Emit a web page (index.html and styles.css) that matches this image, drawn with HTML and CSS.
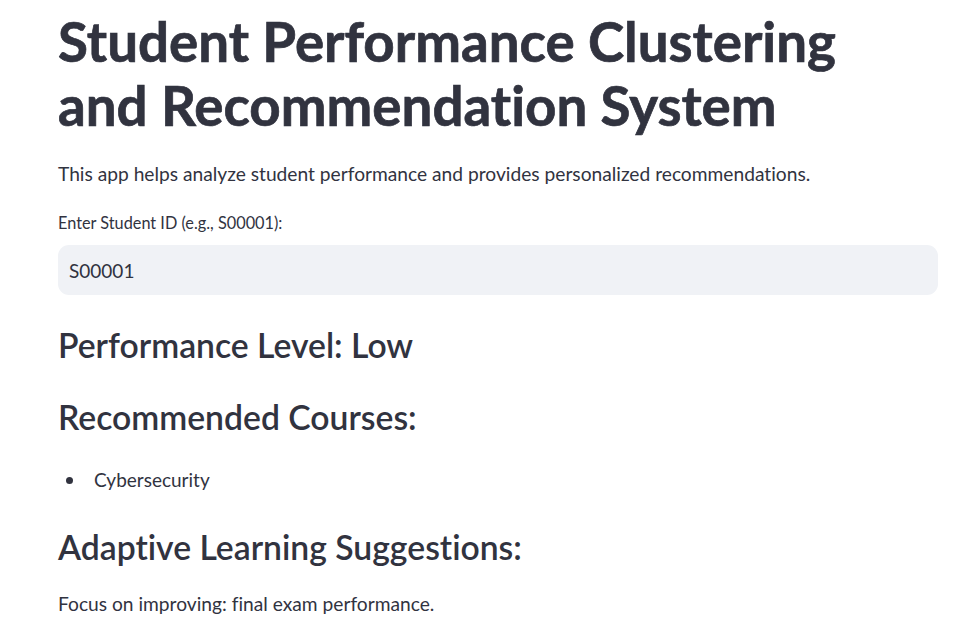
FILE: index.html
```html
<!DOCTYPE html>
<html lang="en">
<head>
<meta charset="utf-8">
<title>Student Performance Clustering and Recommendation System</title>
<link rel="stylesheet" href="styles.css">
</head>
<body>
<main class="main">
  <h1 class="title">Student Performance Clustering and Recommendation System</h1>
  <p class="intro">This app helps analyze student performance and provides personalized recommendations.</p>
  <div class="field">
    <label class="field-label" for="sid">Enter Student ID (e.g., S00001):</label>
    <input class="field-input" id="sid" type="text" value="S00001">
  </div>
  <h3 class="section-head section-first">Performance Level: Low</h3>
  <h3 class="section-head">Recommended Courses:</h3>
  <ul class="course-list">
    <li class="course-item">Cybersecurity</li>
  </ul>
  <h3 class="section-head">Adaptive Learning Suggestions:</h3>
  <p class="suggest">Focus on improving: final exam performance.</p>
</main>
</body>
</html>
```
FILE: styles.css
```css
* { box-sizing: border-box; }
html, body { margin: 0; padding: 0; background: #ffffff; }
body {
  font-family: Lato, "Open Sans", sans-serif;
  color: #31333f;
  font-variant-ligatures: none;
  font-feature-settings: "liga" 0;
}
.main {
  padding: 0 19px 0 58px;
  display: flex;
  flex-direction: column;
}
.title {
  margin: 0;
  padding-top: 9px;
  font-size: 54.7px;
  font-weight: 700;
  line-height: 64px;
  -webkit-text-stroke: 0.7px #31333f;
}
.intro {
  margin: 23px 0 0;
  font-size: 19.2px;
  line-height: 28px;
}
.field { margin-top: 23px; display: flex; flex-direction: column; }
.field-label { font-size: 16.3px; line-height: 24px; }
.field-input {
  margin-top: 10px;
  height: 50px;
  border: none;
  border-radius: 11px;
  background: #f0f2f6;
  padding: 0 11px;
  font-family: inherit;
  font-size: 19px;
  color: #31333f;
  outline: none;
}
.section-head {
  margin: 0;
  font-size: 33.7px;
  font-weight: 600;
  line-height: 44px;
}
.section-first { margin-top: 28px; }
.section-head + .section-head { margin-top: 28px; }
.course-list {
  margin: 27px 0 0;
  padding: 0;
  list-style: none;
  font-size: 19px;
  line-height: 28px;
}
.course-item { display: flex; align-items: center; }
.course-item::before {
  content: "";
  width: 7px;
  height: 7px;
  border-radius: 50%;
  background: #31333f;
  margin: 0 21px 0 8px;
}
.course-list + .section-head { margin-top: 31px; }
.suggest { margin: 21px 0 0; font-size: 19.2px; line-height: 28px; }
```
